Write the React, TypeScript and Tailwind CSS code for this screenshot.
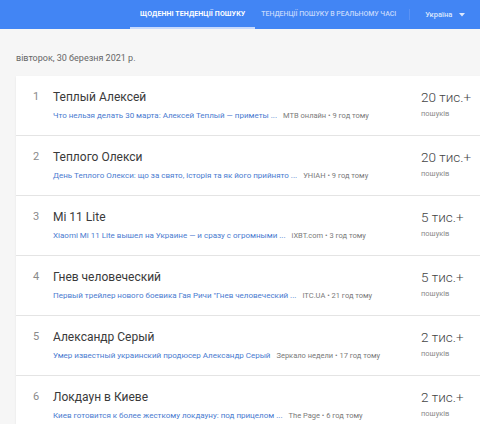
import React from 'react';

type Trend = {
  rank: number;
  title: string;
  article: string;
  source: string;
  ago: string;
  count: string;
};

const TRENDS: Trend[] = [
  { rank: 1, title: 'Теплый Алексей', article: 'Что нельзя делать 30 марта: Алексей Теплый — приметы ...', source: 'МТВ онлайн', ago: '9 год тому', count: '20 тис.+' },
  { rank: 2, title: 'Теплого Олекси', article: 'День Теплого Олекси: що за свято, історія та як його прийнято ...', source: 'УНІАН', ago: '9 год тому', count: '20 тис.+' },
  { rank: 3, title: 'Mi 11 Lite', article: 'Xiaomi Mi 11 Lite вышел на Украине — и сразу с огромными ...', source: 'iXBT.com', ago: '3 год тому', count: '5 тис.+' },
  { rank: 4, title: 'Гнев человеческий', article: 'Первый трейлер нового боевика Гая Ричи "Гнев человеческий ...', source: 'ITC.UA', ago: '21 год тому', count: '5 тис.+' },
  { rank: 5, title: 'Александр Серый', article: 'Умер известный украинский продюсер Александр Серый', source: 'Зеркало недели', ago: '17 год тому', count: '2 тис.+' },
  { rank: 6, title: 'Локдаун в Киеве', article: 'Киев готовится к более жесткому локдауну: под прицелом ...', source: 'The Page', ago: '6 год тому', count: '2 тис.+' },
];

const TrendRow: React.FC<{ t: Trend; last: boolean }> = ({ t, last }) => (
  <div className={`flex h-[60px] ${last ? '' : 'border-b border-[#e4e4e4]'}`}>
    <div className="w-[37px] pl-[17px] pt-[14px] text-[11px] leading-[14px] text-[#8a8a8a]">{t.rank}</div>
    <div className="flex-1 min-w-0 pt-[14px]">
      <div className="text-[12px] leading-[14px] text-[#3a3a3a]">{t.title}</div>
      <div className="mt-[7px] flex items-center whitespace-nowrap leading-[10px]">
        <span className="text-[8px] text-[#4a7bd0]">{t.article}</span>
        <span className="ml-[6px] text-[7.5px] text-[#7a7a7a]">
          {t.source} • {t.ago}
        </span>
      </div>
    </div>
    <div className="w-[59px] pt-[13px]">
      <div className="text-[13.5px] leading-[16px] font-light text-[#444]">{t.count}</div>
      <div className="mt-[4px] text-[7.5px] leading-[10px] text-[#8a8a8a]">пошуків</div>
    </div>
  </div>
);

const App: React.FC = () => {
  return (
    <div className="w-[480px] h-[424px] overflow-hidden bg-[#f6f6f6]" style={{ fontFamily: 'Roboto, "Noto Sans", sans-serif' }}>
      <header className="h-[29px] bg-[#4285f4] flex items-stretch pl-[130px]">
        <div className="relative flex items-center px-[10px] text-[7px] font-bold text-white tracking-[0.1px]">
          ЩОДЕННІ ТЕНДЕНЦІЇ ПОШУКУ
          <div className="absolute left-0 right-0 bottom-0 h-[2px] bg-[#c8dafc]" />
        </div>
        <div className="flex items-center pl-[6px] text-[7px] font-medium text-[#c4d8fc] tracking-[-0.05px]">
          ТЕНДЕНЦІЇ ПОШУКУ В РЕАЛЬНОМУ ЧАСІ
        </div>
        <div className="my-[9px] w-px bg-[#5a92f5] ml-[13px]" />
        <div className="flex items-center pl-[15px] text-[7.5px] font-medium text-[#dde8fd]">
          Україна
          <svg className="ml-[7px]" width="6" height="4" viewBox="0 0 6 4">
            <path d="M0 0 L6 0 L3 3.5 Z" fill="#dde8fd" />
          </svg>
        </div>
      </header>

      <div className="pl-[16px] pt-[23px] text-[9px] leading-[12px] text-[#666]">вівторок, 30 березня 2021 р.</div>

      <div className="ml-[16px] mt-[12px] bg-white shadow-[0_1px_2px_rgba(0,0,0,0.08)]">
        {TRENDS.map((t, i) => (
          <TrendRow key={t.rank} t={t} last={i === TRENDS.length - 1} />
        ))}
      </div>
    </div>
  );
};

export default App;
